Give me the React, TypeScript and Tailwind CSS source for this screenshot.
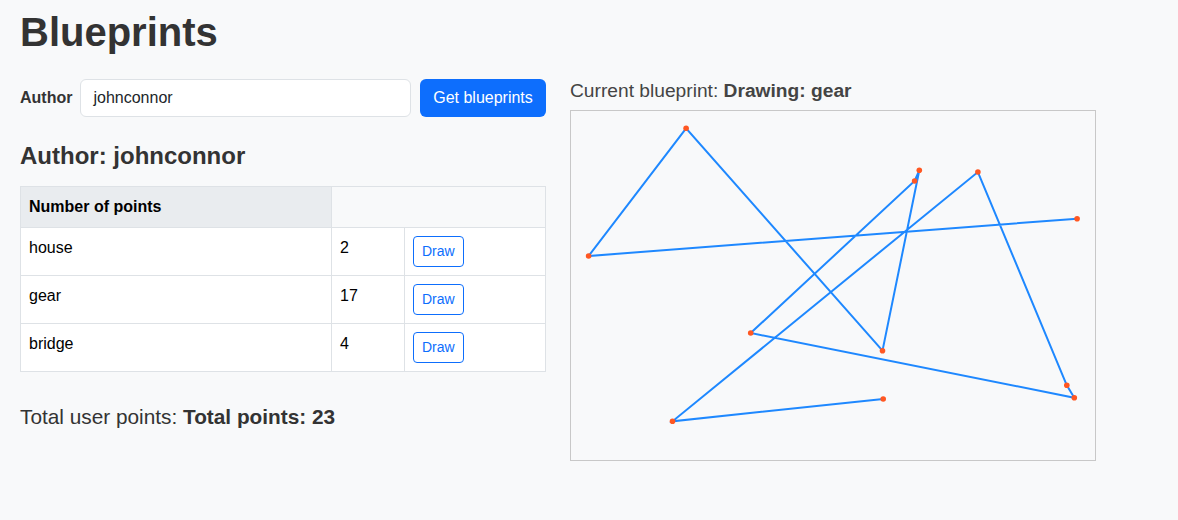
import React from "react";

const pts: [number, number][] = [
  [1077.1, 218.7],
  [588.6, 256],
  [686.1, 128.3],
  [882.5, 350.7],
  [919.3, 170.3],
  [914.6, 181],
  [750.7, 333],
  [1074.3, 397.7],
  [1066.8, 385.3],
  [977.9, 172],
  [672.5, 421.3],
  [883.2, 399],
];

const OX = 571;
const OY = 111;

function Canvas() {
  const rel = pts.map(([x, y]) => [x - OX, y - OY] as [number, number]);
  const d = rel.map(([x, y], i) => `${i === 0 ? "M" : "L"}${x} ${y}`).join(" ");
  return (
    <div className="border border-[#c8c8c8] w-[526px] h-[351px] bg-[#f8f9fa]">
      <svg width="524" height="349" viewBox="0 0 524 349" className="block">
        <path d={d} fill="none" stroke="#1e88ff" strokeWidth="2" strokeLinejoin="miter" />
        {rel.map(([x, y], i) => (
          <circle key={i} cx={x} cy={y} r="2.8" fill="#ff5722" />
        ))}
      </svg>
    </div>
  );
}

const rows = [
  { name: "house", n: 2 },
  { name: "gear", n: 17 },
  { name: "bridge", n: 4 },
];

export default function App() {
  return (
    <div
      className="min-h-[520px] bg-[#f8f9fa] text-[#333] px-5 pt-[8px]"
      style={{ fontFamily: '"Liberation Sans", Arial, sans-serif' }}
    >
      <h1 className="text-[40px] leading-[48px] font-bold mb-[23px]">Blueprints</h1>
      <div className="flex gap-6 items-start">
        <div className="w-[526px] shrink-0">
          <div className="flex items-center">
            <label className="text-[16px] font-bold mr-2">Author</label>
            <div className="flex-1 h-[38px] border border-[#dee2e6] rounded-[6px] bg-white px-3 flex items-center text-[16px] text-[#212529]">
              johnconnor
            </div>
            <button className="ml-[9px] h-[38px] w-[126px] rounded-[6px] bg-[#0d6efd] text-white text-[16px]">
              Get blueprints
            </button>
          </div>
          <h3 className="text-[24px] leading-[29px] font-bold mt-[24px] mb-[16px]">Author: johnconnor</h3>
          <table className="w-[526px] border-collapse text-[16px] leading-[24px] text-black">
            <thead>
              <tr className="h-[41px]">
                <th className="w-[311px] border border-[#dee2e6] bg-[#e9ecef] text-left font-bold px-2 py-2">
                  Number of points
                </th>
                <th colSpan={2} className="border border-[#dee2e6]"></th>
              </tr>
            </thead>
            <tbody>
              {rows.map((r) => (
                <tr key={r.name} className="bg-white h-[48px]">
                  <td className="border border-[#dee2e6] px-2 pt-2 pb-2 align-top">{r.name}</td>
                  <td className="w-[73px] border border-[#dee2e6] px-2 pt-2 pb-2 align-top">{r.n}</td>
                  <td className="border border-[#dee2e6] px-2 pt-2 pb-2 align-top">
                    <button className="h-[31px] px-2 border border-[#0d6efd] rounded-[4px] text-[#0d6efd] text-[14px] leading-[21px] bg-white block">
                      Draw
                    </button>
                  </td>
                </tr>
              ))}
            </tbody>
          </table>
          <p className="text-[20.8px] leading-[30px] mt-[30px]">
            Total user points: <b>Total points: 23</b>
          </p>
        </div>
        <div>
          <div className="text-[19.2px] leading-[23px] text-[#444] mb-[8px]">
            Current blueprint: <b>Drawing: gear</b>
          </div>
          <Canvas />
        </div>
      </div>
    </div>
  );
}
